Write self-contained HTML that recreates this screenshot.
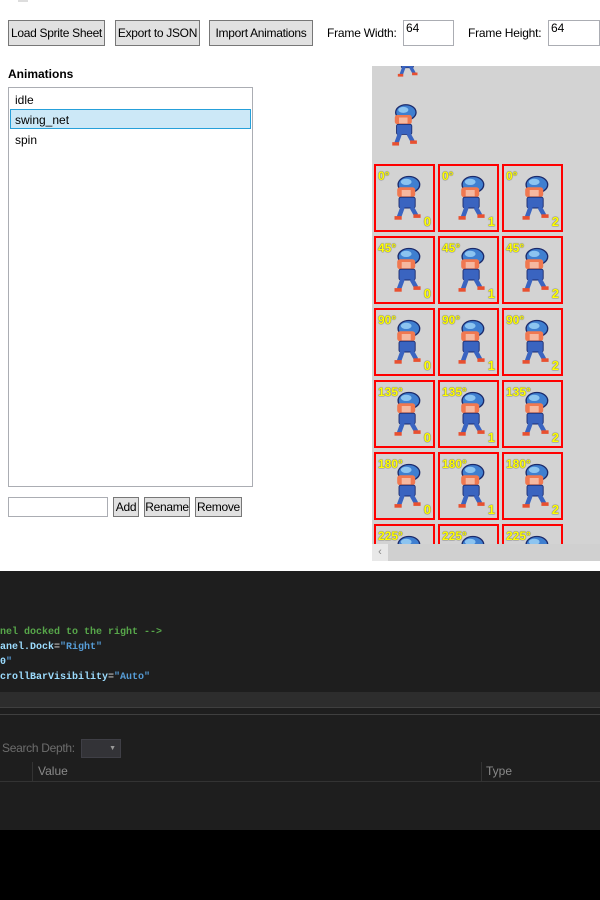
<!DOCTYPE html>
<html><head><meta charset="utf-8"><style>
*{margin:0;padding:0;box-sizing:border-box}
body{width:600px;height:900px;background:#000;position:relative;overflow:hidden;font-family:"Liberation Sans",sans-serif;font-size:12px;color:#000}
.top{position:absolute;left:0;top:0;width:600px;height:571px;background:#fff}
.btn{position:absolute;background:#e1e1e1;border:1px solid #777;height:26px;line-height:24px;text-align:center;font-size:12px;white-space:nowrap;overflow:hidden;letter-spacing:-0.3px}
.sb{position:absolute;background:#e1e1e1;border:1px solid #777;height:20px;line-height:18px;text-align:center;font-size:12px;white-space:nowrap;overflow:hidden;letter-spacing:-0.3px}
.lbl{position:absolute;font-size:12px;white-space:nowrap}
.inp{position:absolute;border:1px solid #abadb3;background:#fff;font-size:12px;padding:0 2px;line-height:14px}
.grid{position:absolute;left:372px;top:66px;width:228px;height:478px;background:#d3d3d3;overflow:hidden}
.cell{position:absolute;width:61px;height:68px;border:2px solid #f00}
.cell .a{position:absolute;left:2px;top:3px;color:#ff0;font-weight:bold;font-size:12px;text-shadow:0 0 1px #555,0 0 1px #555}
.cell .n{position:absolute;right:2px;bottom:1px;color:#ff0;font-weight:bold;font-size:13px;text-shadow:0 0 1px #555,0 0 1px #555}
.cell svg{position:absolute;left:14px;top:6px}
.code{position:absolute;left:0;font-family:"Liberation Mono",monospace;font-size:10px;font-weight:bold;color:#9cdcfe;white-space:pre}
</style></head><body>
<svg width="0" height="0" style="position:absolute"><defs>
<symbol id="sp" viewBox="0 0 40 56">
<ellipse cx="21" cy="12" rx="12" ry="9" fill="#3f7fd0" stroke="#1b2a6b" stroke-width="1.5"/>
<ellipse cx="18" cy="9" rx="6" ry="3.5" fill="#8cc4f0"/>
<rect x="8" y="15" width="20" height="11" rx="3" fill="#f07850"/>
<rect x="13" y="18" width="10" height="7" fill="#f5b8a0"/>
<rect x="10" y="26" width="18" height="12" rx="2" fill="#3a64c0" stroke="#1b2a6b"/>
<path d="M14 37 L10 48 M24 37 L29 46" stroke="#3a64c0" stroke-width="5"/>
<rect x="5" y="47" width="8" height="4" fill="#e85030"/><rect x="26" y="45" width="8" height="4" fill="#e85030"/>
</symbol></defs></svg>
<div class="top">
<div style="position:absolute;left:18px;top:0;width:10px;height:2px;background:#ddd"></div>
<div class="btn" style="left:8px;top:20px;width:97px">Load Sprite Sheet</div>
<div class="btn" style="left:115px;top:20px;width:85px">Export to JSON</div>
<div class="btn" style="left:209px;top:20px;width:104px">Import Animations</div>
<div class="lbl" style="left:327px;top:26px;letter-spacing:-0.2px">Frame Width:</div>
<div class="inp" style="left:403px;top:20px;width:51px;height:26px">64</div>
<div class="lbl" style="left:468px;top:26px;letter-spacing:-0.2px">Frame Height:</div>
<div class="inp" style="left:548px;top:20px;width:52px;height:26px">64</div>
<div class="lbl" style="left:8px;top:67px;font-weight:bold">Animations</div>
<div style="position:absolute;left:8px;top:87px;width:245px;height:400px;border:1px solid #abadb3"></div>
<div class="lbl" style="left:15px;top:93px">idle</div>
<div style="position:absolute;left:10px;top:109px;width:241px;height:20px;background:#cce8f7;border:1px solid #26a0da"></div>
<div class="lbl" style="left:15px;top:113px">swing_net</div>
<div class="lbl" style="left:15px;top:133px">spin</div>
<div class="inp" style="left:8px;top:497px;width:100px;height:20px"></div>
<div class="sb" style="left:113px;top:497px;width:26px">Add</div>
<div class="sb" style="left:144px;top:497px;width:46px">Rename</div>
<div class="sb" style="left:195px;top:497px;width:47px">Remove</div>
<div class="grid">
<svg style="position:absolute;left:22px;top:-24px" width="28" height="38"><use href="#sp"/></svg>
<svg style="position:absolute;left:16px;top:32px" width="34" height="56"><use href="#sp"/></svg>
<div id="cells"></div>
</div>
<div style="position:absolute;left:372px;top:544px;width:228px;height:17px;background:#d0d0d0"></div>
<div style="position:absolute;left:372px;top:544px;width:16px;height:17px;background:#e8e8e8;color:#888;font-size:11px;line-height:16px;text-align:center">&lsaquo;</div>
</div>
<div style="position:absolute;left:0;top:571px;width:600px;height:259px;background:#1e1e1e">
<div class="code" style="top:56px;color:#57a64a">nel docked to the right --&gt;</div>
<div class="code" style="top:71px">anel.Dock<span style="color:#b4b4b4">=</span><span style="color:#569cd6">"Right"</span></div>
<div class="code" style="top:86px">0<span style="color:#569cd6">"</span></div>
<div class="code" style="top:101px">crollBarVisibility<span style="color:#b4b4b4">=</span><span style="color:#569cd6">"Auto"</span></div>
<div style="position:absolute;left:0;top:121px;width:600px;height:16px;background:#2d2d2d;border-bottom:1px solid #3f3f3f"></div>
<div style="position:absolute;left:0;top:143px;width:600px;height:1px;background:#3f3f3f"></div>
<div style="position:absolute;left:2px;top:170px;color:#6d6d6d;font-size:12px;letter-spacing:-0.3px">Search Depth:</div>
<div style="position:absolute;left:81px;top:168px;width:40px;height:19px;background:#333337;border:1px solid #3f3f46;color:#999;font-size:7px;text-align:right;padding:5px 4px">▼</div>
<div style="position:absolute;left:32px;top:191px;width:1px;height:19px;background:#333"></div>
<div style="position:absolute;left:38px;top:193px;color:#8a8a8a;font-size:12px">Value</div>
<div style="position:absolute;left:481px;top:191px;width:1px;height:19px;background:#333"></div>
<div style="position:absolute;left:486px;top:193px;color:#8a8a8a;font-size:12px">Type</div>
<div style="position:absolute;left:0;top:210px;width:600px;height:1px;background:#333"></div>
</div>
<script>
var c=document.getElementById('cells'),a=['0°','45°','90°','135°','180°','225°'],h='';
for(var r=0;r<6;r++)for(var k=0;k<3;k++){
h+='<div class="cell" style="left:'+(2+k*64)+'px;top:'+(98+r*72)+'px"><svg width="36" height="54"><use href="#sp"/></svg><span class="a">'+a[r]+'</span><span class="n">'+k+'</span></div>';}
c.innerHTML=h;
</script>
</body></html>
